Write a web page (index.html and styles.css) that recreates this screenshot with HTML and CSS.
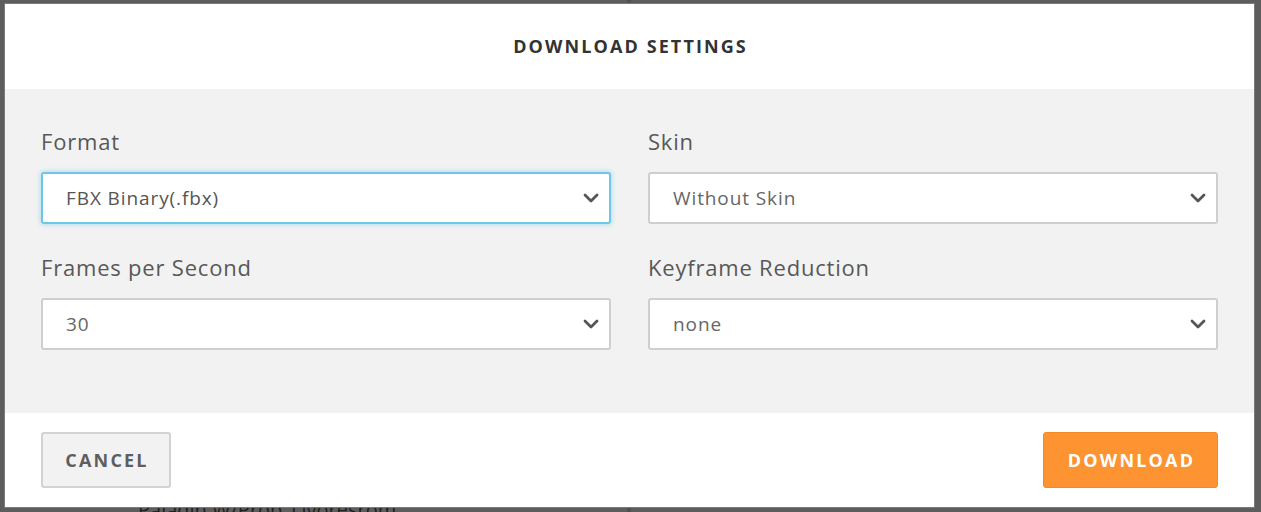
FILE: index.html
```html
<!DOCTYPE html>
<html lang="en">
<head>
<meta charset="utf-8">
<title>Download Settings</title>
<link rel="stylesheet" href="styles.css">
</head>
<body>
<div class="backdrop">
  <div class="bg-divider"></div>
  <div class="bg-caption">Paladin W/Prop_Livoresrom</div>
</div>
<div class="modal">
  <header class="modal-header">
    <h1 class="modal-title">DOWNLOAD SETTINGS</h1>
  </header>
  <section class="modal-body">
    <div class="field">
      <label class="field-label">Format</label>
      <div class="select select-focus">
        <span class="select-value">FBX Binary(.fbx)</span>
        <svg class="chevron" viewBox="0 0 16 10" width="16" height="10"><path d="M2 2 L8 8 L14 2" fill="none" stroke="#555" stroke-width="2.8" stroke-linecap="round" stroke-linejoin="round"/></svg>
      </div>
    </div>
    <div class="field">
      <label class="field-label">Skin</label>
      <div class="select">
        <span class="select-value">Without Skin</span>
        <svg class="chevron" viewBox="0 0 16 10" width="16" height="10"><path d="M2 2 L8 8 L14 2" fill="none" stroke="#555" stroke-width="2.8" stroke-linecap="round" stroke-linejoin="round"/></svg>
      </div>
    </div>
    <div class="field">
      <label class="field-label">Frames per Second</label>
      <div class="select">
        <span class="select-value">30</span>
        <svg class="chevron" viewBox="0 0 16 10" width="16" height="10"><path d="M2 2 L8 8 L14 2" fill="none" stroke="#555" stroke-width="2.8" stroke-linecap="round" stroke-linejoin="round"/></svg>
      </div>
    </div>
    <div class="field">
      <label class="field-label">Keyframe Reduction</label>
      <div class="select">
        <span class="select-value">none</span>
        <svg class="chevron" viewBox="0 0 16 10" width="16" height="10"><path d="M2 2 L8 8 L14 2" fill="none" stroke="#555" stroke-width="2.8" stroke-linecap="round" stroke-linejoin="round"/></svg>
      </div>
    </div>
  </section>
  <footer class="modal-footer">
    <button class="btn btn-cancel">CANCEL</button>
    <button class="btn btn-download">DOWNLOAD</button>
  </footer>
</div>
</body>
</html>
```
FILE: styles.css
```css
html, body {
  margin: 0;
  padding: 0;
}
body {
  width: 1261px;
  height: 512px;
  overflow: hidden;
  background: #5d5d5d;
  font-family: "Open Sans", "Noto Sans", sans-serif;
  position: relative;
}
.backdrop {
  height: 512px;
  position: relative;
}
.bg-divider {
  position: absolute;
  left: 627px;
  top: 0;
  width: 4px;
  height: 512px;
  background: #505050;
}
.bg-caption {
  position: absolute;
  left: 138px;
  top: 496px;
  font-size: 20px;
  color: #1f1f1f;
  white-space: nowrap;
}
.modal {
  position: absolute;
  left: 5px;
  top: 4px;
  width: 1249px;
  height: 503px;
  background: #fff;
  display: flex;
  flex-direction: column;
  box-shadow: 0 0 0 1px #7a7a7a;
}
.modal-header {
  height: 85px;
  display: flex;
  align-items: center;
  justify-content: center;
}
.modal-title {
  margin: 0;
  font-size: 18px;
  font-weight: 700;
  letter-spacing: 2.1px;
  color: #333;
  padding-left: 2px;
  padding-bottom: 1px;
}
.modal-body {
  background: #f2f2f2;
  height: 324px;
  box-sizing: border-box;
  padding: 37px 36px 0 36px;
  display: grid;
  grid-template-columns: 570px 570px;
  column-gap: 37px;
  row-gap: 28px;
  align-content: start;
}
.field {
  display: flex;
  flex-direction: column;
}
.field-label {
  font-size: 22px;
  color: #585858;
  line-height: 30px;
  letter-spacing: 0.8px;
  margin-bottom: 16px;
}
.select {
  height: 52px;
  box-sizing: border-box;
  border: 2px solid #cfcfcf;
  border-radius: 3px;
  background: #fff;
  display: flex;
  align-items: center;
  justify-content: space-between;
  padding: 0 10px 0 23px;
}
.select-focus {
  border-color: #6cc8e6;
  box-shadow: 0 0 4px 1px rgba(108, 200, 230, 0.45);
}
.select-value {
  font-size: 19px;
  letter-spacing: 0.9px;
  color: #666;
}
.select-focus .select-value {
  color: #555;
}
.chevron {
  display: block;
}
.modal-footer {
  flex: 1;
  display: flex;
  align-items: flex-start;
  justify-content: space-between;
  padding: 19px 36px 0 36px;
}
.btn {
  height: 56px;
  border-radius: 3px;
  font-family: "Open Sans", "Noto Sans", sans-serif;
  font-size: 18px;
  font-weight: 700;
  letter-spacing: 2.2px;
  cursor: pointer;
  padding: 0 0 0 2px;
}
.btn-cancel {
  width: 130px;
  background: #f2f2f2;
  border: 2px solid #d2d2d2;
  color: #5e5e5e;
}
.btn-download {
  width: 175px;
  background: #fd9331;
  border: 1px solid #f58a25;
  color: #fff;
}
```
